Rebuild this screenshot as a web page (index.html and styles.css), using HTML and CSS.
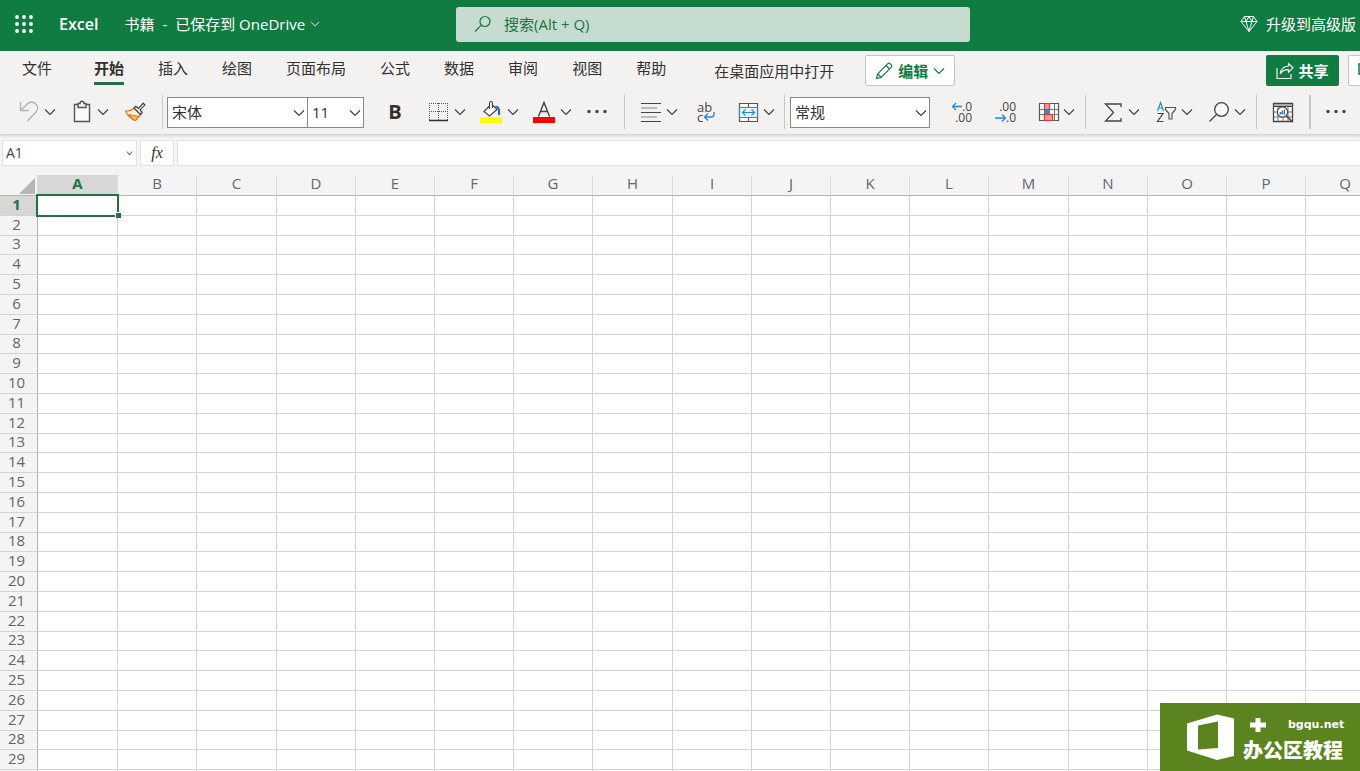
FILE: index.html
```html
<!DOCTYPE html>
<html lang="zh-CN">
<head>
<meta charset="utf-8">
<title>书籍 - Excel</title>
<link rel="stylesheet" href="styles.css">
</head>
<body>
<svg class="defs" aria-hidden="true">
  <symbol id="chev" viewBox="0 0 12 12"><path d="M1 3.5l5 5 5-5" fill="none" stroke="currentColor" stroke-width="1.2"/></symbol>
  <symbol id="dots" viewBox="0 0 24 24"><circle cx="3" cy="11.500" r="1.700"/><circle cx="11" cy="11.500" r="1.700"/><circle cx="19" cy="11.500" r="1.700"/></symbol>
</svg>

<header class="topbar">
  <div class="brand">
    <button class="launcher" aria-label="应用启动器">
      <svg width="20" height="20" viewBox="0 0 20 20" fill="#fff"><circle cx="3" cy="3" r="1.900"/><circle cx="10" cy="3" r="1.900"/><circle cx="17" cy="3" r="1.900"/><circle cx="3" cy="10" r="1.900"/><circle cx="10" cy="10" r="1.900"/><circle cx="17" cy="10" r="1.900"/><circle cx="3" cy="17" r="1.900"/><circle cx="10" cy="17" r="1.900"/><circle cx="17" cy="17" r="1.900"/></svg>
    </button>
    <a class="app-name" href="#">Excel</a>
    <button class="doc-name"><span>书籍</span><span>-</span><span>已保存到 OneDrive</span><svg class="chev small"><use href="#chev"/></svg></button>
  </div>
  <label class="search">
    <svg width="18" height="18" viewBox="0 0 18 18" fill="none" stroke="#107c41" stroke-width="1.2"><circle cx="11" cy="6.5" r="5"/><path d="M7.3 10.2L1 16.5"/></svg>
    <input type="text" placeholder="搜索(Alt + Q)" aria-label="搜索">
  </label>
  <button class="upgrade">
    <svg width="18" height="18" viewBox="0 0 18 18" fill="none" stroke="#fff" stroke-width="1" stroke-linejoin="round"><path d="M4.5 1.5h9l3.500 5L9 16.500 1 6.500zM1 6.500h16M4.500 1.500l1.500 5L9 16.500l3-10 1.500-5M6 6.500l3-5 3 5"/></svg>
    <span>升级到高级版</span>
  </button>
</header>

<section class="ribbon">
  <div class="tab-row">
    <nav class="tabs">
      <button class="tab file">文件</button>
      <button class="tab active">开始</button>
      <button class="tab">插入</button>
      <button class="tab">绘图</button>
      <button class="tab">页面布局</button>
      <button class="tab">公式</button>
      <button class="tab">数据</button>
      <button class="tab">审阅</button>
      <button class="tab">视图</button>
      <button class="tab">帮助</button>
    </nav>
    <button class="open-desktop">在桌面应用中打开</button>
    <button class="boxed edit">
      <svg width="18" height="18" viewBox="0 0 18 18" fill="none" stroke="#107c41" stroke-width="1.2" stroke-linejoin="round"><path d="M1.500 16.500l1.200-4.700L12.800 1.700q1.200-1 2.500.200l.8.800q1.200 1.300.2 2.500L6.200 15.300zM11 3.500L14.500 7M2.700 11.800q.5 1.200 1.700 1.400.3 1.500 1.800 2.100"/></svg>
      <span>编辑</span>
      <svg class="chev"><use href="#chev"/></svg>
    </button>
    <button class="share">
      <svg width="18" height="18" viewBox="0 0 18 18" fill="none" stroke="#fff" stroke-width="1.1"><path d="M1 6v10.500h14V12M12.500 1.500L17 5.800l-4.500 4.300V7.600C8.500 7.500 6 9 4.200 12 4.700 7.500 7.500 4.500 12.500 4z"/></svg>
      <span>共享</span>
    </button>
    <button class="boxed comments" aria-label="批注"><svg width="16" height="16" viewBox="0 0 16 16" fill="none" stroke="#107c41" stroke-width="1.500"><path d="M1 1h14v10H7l-3 3v-3H1z"/></svg></button>
  </div>

  <div class="toolbar">
    <div class="group g-clip">
      <button class="tool" aria-label="撤消"><svg class="icon" viewBox="0 0 24 24" fill="none" stroke="#b3b0ad" stroke-width="1.300"><path d="M3.500 2v8.500h8M3.800 10.200L10 4.200c3-2.800 6.500-2.400 8.800-.2 2.300 2.300 2.500 5.700 0 8.300L10.500 21"/></svg><svg class="chev"><use href="#chev"/></svg></button>
      <button class="tool" aria-label="粘贴"><svg class="icon" viewBox="0 0 24 24" fill="none" stroke="#555" stroke-width="1.400"><path d="M8 4.500H4.500v17h15v-17H16M8 3.500h2c0-3 4-3 4 0h2v4H8z" fill="#fafafa"/></svg><svg class="chev"><use href="#chev"/></svg></button>
      <button class="tool" aria-label="格式刷"><svg class="icon" viewBox="0 0 24 24" fill="none" stroke-width="1.200" stroke-linejoin="round"><path d="M2.500 11c4 .2 6.500-.7 8.500-3l6.500 6.500-5 6C8 19 4.500 15.500 2.500 11z" fill="#fdf0dc" stroke="#dd7b15"/><path d="M6 14.500l9.500 2-3 4C9.500 19.500 7.500 17 6 14.500z" fill="#f7c069" stroke="#dd7b15"/><path d="M11 8l1.800-1.800 2.700 2.300 4.700-5.300 1.800 1.700-5 5 2.200 2.600-1.700 2z" fill="#fff" stroke="#444"/></svg></button>
    </div>
    <div class="group g-font">
      <div class="combos">
        <span class="combo font"><select aria-label="字体"><option>宋体</option></select><svg class="chev"><use href="#chev"/></svg></span>
        <span class="combo size"><select aria-label="字号"><option>11</option></select><svg class="chev"><use href="#chev"/></svg></span>
      </div>
      <div class="tools">
        <button class="tool bold" aria-label="加粗">B</button>
        <button class="tool" aria-label="边框"><svg class="icon" viewBox="0 0 24 24" fill="none" stroke="#555"><path d="M2 3.500h19M2.500 3v17M20.500 3v17M11.500 3v17M2 11.500h19" stroke-dasharray="1 1"/><path d="M2 20.500h19" stroke="#333" stroke-width="1.500"/></svg><svg class="chev"><use href="#chev"/></svg></button>
        <button class="tool" aria-label="填充颜色"><svg class="icon" viewBox="0 0 24 24" fill="none"><path d="M10 5.500L4 11.500l5.500 4.500L17 9.500 13 5.500" fill="#fff" stroke="#444" stroke-width="1.200"/><path d="M9.500 9V3.200q0-1.700 1.500-1.700t1.500 1.700V8" stroke="#444" stroke-width="1.100"/><path d="M15.500 6.500q4.500 0 3.500 8.500" stroke="#1a6fc4" stroke-width="2.200"/><path d="M0 17h22v6H0z" fill="#ff0"/></svg><svg class="chev"><use href="#chev"/></svg></button>
        <button class="tool" aria-label="字体颜色"><svg class="icon" viewBox="0 0 24 24" fill="none"><path d="M5.500 16.500L11 2.500l5.500 14M7.300 11.500h7.400" stroke="#444" stroke-width="1.400"/><path d="M0 17h22v6H0z" fill="#f00"/></svg><svg class="chev"><use href="#chev"/></svg></button>
        <button class="tool" aria-label="更多字体选项"><svg class="icon solid"><use href="#dots"/></svg></button>
      </div>
    </div>
    <div class="group g-align">
      <button class="tool" aria-label="对齐"><svg class="icon" viewBox="0 0 24 24" stroke="#444"><path d="M2 3.500h20M2 12.500h20M2 21.500h20"/><path d="M2 8h16M2 17h16" stroke="#888"/></svg><svg class="chev"><use href="#chev"/></svg></button>
      <button class="tool solo" aria-label="自动换行"><svg class="icon" viewBox="0 0 24 24"><text x="2" y="12" class="t-ab">ab</text><text x="2" y="22" class="t-ab">c</text><path d="M19 12v2q0 3-3 3h-6M13 13.500L9.500 17l3.500 3.500" fill="none" stroke="#2b88d8" stroke-width="1.400"/></svg></button>
      <button class="tool" aria-label="合并"><svg class="icon" viewBox="0 0 24 24" fill="none" stroke="#555"><path d="M3.500 3.500h18v18h-18zM12.500 3v4M12.500 18v4" fill="#fff" stroke-width="1.200"/><path d="M3.500 7.500h18v10h-18z" fill="#eaf4fc" stroke="#2b88d8" stroke-width="1.200"/><path d="M6.500 12.500h12M9.500 9.500l-3 3 3 3M15.500 9.500l3 3-3 3" stroke="#2b88d8" stroke-width="1.200"/></svg><svg class="chev"><use href="#chev"/></svg></button>
    </div>
    <div class="group g-number">
      <span class="combo format"><select aria-label="数字格式"><option>常规</option></select><svg class="chev"><use href="#chev"/></svg></span>
      <div class="tools">
        <button class="tool solo" aria-label="增加小数位数"><svg class="icon" viewBox="0 0 24 24"><text x="21" y="11" text-anchor="end" class="t-num">.0</text><text x="21" y="22" text-anchor="end" class="t-num">.00</text><path d="M11 6.500H2M5 3L1.500 6.500 5 10" fill="none" stroke="#2b88d8" stroke-width="1.300"/></svg></button>
        <button class="tool solo" aria-label="减少小数位数"><svg class="icon" viewBox="0 0 24 24"><text x="21" y="11" text-anchor="end" class="t-num">.00</text><text x="21" y="22" text-anchor="end" class="t-num">.0</text><path d="M0 18h10M7 14.500l3.500 3.500L7 21.500" fill="none" stroke="#2b88d8" stroke-width="1.300"/></svg></button>
        <button class="tool" aria-label="条件格式"><svg class="icon" viewBox="0 0 24 24" fill="none"><path d="M3.500 3.500h19v17h-19z" fill="#fff" stroke="#555" stroke-width="1.200"/><path d="M3 9.500h19M3 14.500h19M8.500 4v17M18.500 4v17M13.500 4v17" stroke="#777"/><path d="M8.500 3.500h5v6h-5zM8.500 14.500h8v6h-8z" fill="#ff9a9a" stroke="#e33" stroke-width="1.200"/><path d="M8 10h5v4H8z" fill="#2b88d8"/></svg><svg class="chev"><use href="#chev"/></svg></button>
      </div>
    </div>
    <div class="group g-edit">
      <button class="tool" aria-label="自动求和"><svg class="icon" viewBox="0 0 24 24" fill="none" stroke="#444" stroke-width="1.300"><path d="M20 7V4H4.500l8 8.500-8 8.500H20v-3"/></svg><svg class="chev"><use href="#chev"/></svg></button>
      <button class="tool" aria-label="排序和筛选"><svg class="icon" viewBox="0 0 24 24" fill="none"><path d="M3.500 11L6.500 2.500 9.500 11M4.500 8h4" stroke="#2b88d8" stroke-width="1.200"/><path d="M3.500 13.500H9L3.500 21.500H9.500" stroke="#444" stroke-width="1.200"/><path d="M11.500 7.500h10v2l-3.500 4v5.500h-3v-5.500l-3.500-4z" stroke="#555" stroke-width="1.200"/></svg><svg class="chev"><use href="#chev"/></svg></button>
      <button class="tool" aria-label="查找"><svg class="icon" viewBox="0 0 24 24" fill="none" stroke="#444" stroke-width="1.300"><circle cx="14.500" cy="9.500" r="6.800" fill="#fafafa"/><path d="M9.500 14.500L2.500 21.500"/></svg><svg class="chev"><use href="#chev"/></svg></button>
    </div>
    <div class="group g-analyze">
      <button class="tool solo" aria-label="分析数据"><svg class="icon" viewBox="0 0 24 24" fill="none" stroke="#444"><path d="M2.500 3.500h19v18h-19z" fill="#fff" stroke-width="1.300"/><path d="M2.500 3.500h19v3h-19z" fill="#aaa" stroke="#444"/><path d="M3 12h18M3 17h18M7 7v14M12 17v4M17 7v14" stroke="#777"/><circle cx="11.500" cy="12" r="5.200" fill="#fff" stroke-width="1.200"/><path d="M9.500 12v2.500M11.500 10.500v4" stroke="#2b88d8" stroke-width="1.800"/><path d="M13.500 9.500v5" stroke="#555"/><path d="M15.300 15.800l6.200 6.200" stroke-width="1.600"/></svg></button>
    </div>
    <div class="group g-more">
      <button class="tool solo" aria-label="更多选项"><svg class="icon solid"><use href="#dots"/></svg></button>
    </div>
  </div>
</section>

<section class="formula-row">
  <label class="name-box"><input type="text" value="A1" aria-label="名称框"><svg width="7" height="7" viewBox="0 0 7 7" fill="none" stroke="#555"><path d="M1 1.500l2.500 3.500L6 1.500"/></svg></label>
  <button class="fx" aria-label="插入函数">fx</button>
  <input class="formula" type="text" aria-label="编辑栏">
</section>

<main class="sheet"><table id="grid"></table></main>

<aside class="badge">
  <svg width="48" height="46" viewBox="0 0 48 46" fill="#fff"><path fill-rule="evenodd" d="M0 9.500L30 .5l17 4V42l-17 4L0 36.500zM11 11.500v24l20-1.500V7.500z"/></svg>
  <div class="badge-text">
    <div class="badge-top"><svg width="16" height="14" viewBox="0 0 16 14" fill="#fff"><path d="M5.500 0h5v4.500H16v5h-5.500V14h-5V9.500H0v-5h5.500z"/></svg><span>bgqu.net</span></div>
    <div class="badge-name">办公区教程</div>
  </div>
</aside>
<script src="script.js"></script>
</body>
</html>
```
FILE: styles.css
```css
* { box-sizing: border-box; }
body {
  margin: 0;
  height: 100vh;
  overflow: hidden;
  display: flex;
  flex-direction: column;
  background: #f4f4f4;
  color: #323130;
  font: 15px/20px "Open Sans", "Noto Sans CJK SC", sans-serif;
}
button, input, select { font: inherit; color: inherit; margin: 0; padding: 0; border: 0; background: none; outline: 0; }
button { white-space: nowrap; }
svg { display: block; flex: none; }
.defs { position: absolute; width: 0; height: 0; }
.chev { width: 12px; height: 12px; color: #444; }
.chev.small { width: 10px; height: 10px; color: #fff; }
.icon { width: 24px; height: 24px; overflow: visible; }
.icon.solid { fill: #444; }

.topbar { flex: none; height: 51px; display: flex; align-items: center; padding-bottom: 3px; background: #107c41; color: #fff; }
.brand { flex: 0 0 456px; display: flex; align-items: center; padding-left: 14px; }
.launcher { margin-right: 25px; }
.app-name { color: inherit; text-decoration: none; font-size: 16px; font-weight: 600; margin-right: 26px; }
.doc-name { display: flex; align-items: center; gap: 8px; }
.doc-name .chev { margin-left: -3px; }
.search { flex: 0 1 514px; height: 35px; display: flex; align-items: center; gap: 12px; padding-left: 18px; border-radius: 3px; background: #c7dcd0; color: #107c41; }
.search input { flex: 1; min-width: 0; }
.search input::placeholder { color: #1b7445; opacity: 1; }
.upgrade { display: flex; align-items: center; gap: 8px; margin-left: auto; padding-right: 4px; }

.ribbon { flex: none; background: #f3f2f1; border-bottom: 1px solid #d8d7d6; box-shadow: 0 1px 3px #0002; }
.tab-row { display: flex; align-items: center; height: 39px; }
.tabs { display: flex; gap: 34px; padding: 0 0 2px 22px; }
.tab { height: 31px; border-bottom: 3px solid transparent; }
.tab.file { margin-right: 8px; }
.tab.active { font-weight: 700; border-color: #217346; }
.open-desktop { margin-left: 48px; }
.boxed { height: 31px; display: flex; align-items: center; background: #fff; border: 1px solid #c8c6c4; border-radius: 2px; color: #107c41; }
.edit { width: 90px; justify-content: center; gap: 5px; margin-left: 31px; font-weight: 700; }
.edit .chev { color: #107c41; }
.share { height: 31px; width: 73px; display: flex; align-items: center; justify-content: center; gap: 4px; margin-left: auto; background: #107c41; color: #fff; border-radius: 2px; font-weight: 700; }
.comments { width: 12px; margin-left: 9px; padding-left: 9px; overflow: hidden; border-right: 0; border-radius: 2px 0 0 2px; }

.toolbar { display: flex; align-items: center; height: 44px; }
.group { display: flex; align-items: center; gap: 14px; height: 34px; border-right: 1px solid #c8c6c4; }
.tools { display: flex; align-items: center; gap: 14px; }
.tool { display: flex; align-items: center; gap: 3px; }
.tool.solo { width: 30px; justify-content: center; }
.tool.bold { width: 24px; justify-content: center; margin-right: 6px; font-size: 20px; font-weight: 700; }
.g-clip { padding: 0 15px 0 17px; }
.g-font { padding: 0 14px 0 4px; gap: 19px; }
.g-align { padding: 0 9px 0 14px; }
.g-number { padding: 0 10px 0 5px; gap: 18px; }
.g-edit { padding: 0 10px 0 15px; }
.g-analyze { padding: 0 11px; border-right-width: 2px; }
.g-more { padding-left: 11px; border: 0; }
.combos { display: flex; }
.combo { position: relative; height: 31px; background: #fff; border: 1px solid #8a8886; }
.combo select { appearance: none; width: 100%; height: 100%; padding-left: 4px; }
.combo .chev { position: absolute; right: 2px; top: 9px; pointer-events: none; }
.combo.font { width: 141px; }
.combo.size { width: 56px; border-left: 0; }
.combo.format { width: 140px; }
.t-ab { font: 13px "Open Sans", sans-serif; fill: #444; }
.t-num { font: 12px "Open Sans", sans-serif; fill: #444; }

.formula-row { flex: none; display: flex; gap: 3px; padding: 5px 0 9px 2px; }
.formula-row > * { height: 26px; background: #fff; border: 1px solid #e1e1e1; }
.name-box { width: 135px; display: flex; align-items: center; padding: 0 3px; }
.name-box input { flex: 1; min-width: 0; font-size: 14px; color: #444; }
.fx { width: 34px; font: italic 16px "Liberation Serif", serif; }
.formula { flex: 1; min-width: 0; border-right: 0; padding: 0 6px; }

.sheet { flex: 1; min-height: 0; overflow: hidden; background: #fff; }
table { table-layout: fixed; width: 1385px; border-collapse: separate; border-spacing: 0; }
th, td { padding: 0; border: 0 solid #d4d4d4; border-width: 0 1px 1px 0; }
th { background: #f4f4f4; color: #666; font-weight: 400; line-height: 14px; padding-bottom: 4px; }
.corner { padding: 0; }
col.rows { width: 38px; }
col { width: 79px; }
col.wide { width: 80px; }
tr { height: 20px; }
tr.short { height: 19px; }
thead tr { height: 21px; }
thead th { border-bottom-color: #b5b5b5; border-right-color: #dcdcdc; }
tbody th { border-right-color: #b5b5b5; padding-right: 4px; }
thead th.on, tbody th.on { background: #d8d7d6; color: #217346; font-weight: 700; }
.corner svg { margin: 2px 2px 0 auto; }
td.selected { position: relative; }
.cursor { position: absolute; inset: -2px -2px -2px -2px; border: 2px solid #217346; pointer-events: none; }
.cursor::after { content: ""; position: absolute; right: -4px; bottom: -3px; width: 5px; height: 5px; background: #217346; border: solid #fff; border-width: 1px 0 0 1px; }

.badge { position: fixed; right: 0; bottom: 0; width: 200px; height: 68px; display: flex; align-items: center; gap: 8px; padding-left: 27px; background: #5b841e; color: #fff; }
.badge-text { padding-top: 6px; }
.badge-top { display: flex; align-items: center; gap: 22px; padding-left: 7px; font: 700 11px/20px "DejaVu Sans", sans-serif; }
.badge-name { font: 900 20px/30px "Noto Sans CJK SC", sans-serif; }
```
FILE: script.js
```js
const letters = "ABCDEFGHIJKLMNOPQ".split("");
const rowCount = 30;
const corner = '<svg width="16" height="16" viewBox="0 0 16 16" fill="#b5b5b5"><path d="M16 0v16H0z"/></svg>';

const cols = letters.map((_, i) => `<col${i === 0 || i % 5 === 2 ? ' class="wide"' : ""}>`).join("");
const head = letters.map((l, i) => `<th${i === 0 ? ' class="on"' : ""}>${l}</th>`).join("");
let body = "";
for (let r = 1; r <= rowCount; r++) {
  const cells = letters.map((_, c) =>
    r === 1 && c === 0 ? '<td class="selected"><div class="cursor"></div></td>' : "<td></td>").join("");
  body += `<tr${r % 5 === 3 ? ' class="short"' : ""}><th${r === 1 ? ' class="on"' : ""}>${r}</th>${cells}</tr>`;
}
document.getElementById("grid").innerHTML =
  `<colgroup><col class="rows">${cols}</colgroup><thead><tr><th class="corner">${corner}</th>${head}</tr></thead><tbody>${body}</tbody>`;
```
